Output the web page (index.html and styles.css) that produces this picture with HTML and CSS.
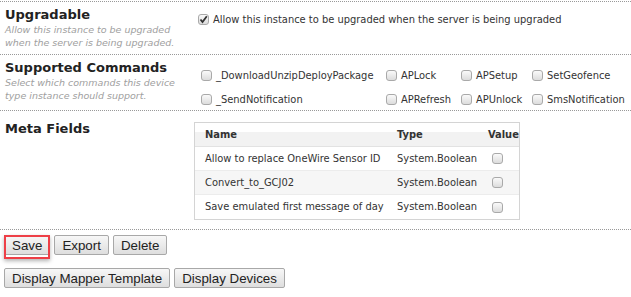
FILE: index.html
```html
<!DOCTYPE html>
<html>
<head>
<meta charset="utf-8">
<link rel="stylesheet" href="styles.css">
</head>
<body>
<div class="section sec-upgrade">
  <div class="label">
    <div class="title">Upgradable</div>
    <div class="desc">Allow this instance to be upgraded when the server is being upgraded.</div>
  </div>
  <div class="content upgrade-content">
    <label class="opt"><span class="cb checked"><svg viewBox="0 0 11 11" width="11" height="11"><path d="M2.5 5.5 L4.5 8 L8.8 2.2" fill="none" stroke="#333" stroke-width="1.8"/></svg></span><span>Allow this instance to be upgraded when the server is being upgraded</span></label>
  </div>
</div>
<div class="section sec-commands">
  <div class="label">
    <div class="title">Supported Commands</div>
    <div class="desc">Select which commands this device type instance should support.</div>
  </div>
  <div class="content commands">
    <label class="opt"><span class="cb"></span><span>_DownloadUnzipDeployPackage</span></label>
    <label class="opt"><span class="cb"></span><span>APLock</span></label>
    <label class="opt"><span class="cb"></span><span>APSetup</span></label>
    <label class="opt"><span class="cb"></span><span>SetGeofence</span></label>
    <label class="opt"><span class="cb"></span><span>_SendNotification</span></label>
    <label class="opt"><span class="cb"></span><span>APRefresh</span></label>
    <label class="opt"><span class="cb"></span><span>APUnlock</span></label>
    <label class="opt"><span class="cb"></span><span>SmsNotification</span></label>
  </div>
</div>
<div class="section sec-meta">
  <div class="label">
    <div class="title">Meta Fields</div>
  </div>
  <div class="content meta">
    <div class="grid">
      <div class="th">Name</div><div class="th">Type</div><div class="th">Value</div>
      <div class="td">Allow to replace OneWire Sensor ID</div><div class="td">System.Boolean</div><div class="td"><span class="cb"></span></div>
      <div class="td alt">Convert_to_GCJ02</div><div class="td alt">System.Boolean</div><div class="td alt"><span class="cb"></span></div>
      <div class="td">Save emulated first message of day</div><div class="td">System.Boolean</div><div class="td"><span class="cb"></span></div>
    </div>
  </div>
</div>
<div class="buttons">
  <div class="btn-row">
    <button class="btn focused">Save</button>
    <button class="btn">Export</button>
    <button class="btn">Delete</button>
  </div>
  <div class="btn-row">
    <button class="btn">Display Mapper Template</button>
    <button class="btn">Display Devices</button>
  </div>
</div>
</body>
</html>
```
FILE: styles.css
```css
html, body {
  margin: 0;
  padding: 0;
  background: #fff;
}
body {
  font-family: "DejaVu Sans", Verdana, sans-serif;
  font-size: 11px;
  color: #333;
  width: 631px;
  height: 297px;
  overflow: hidden;
}
.section {
  display: flex;
  border-top: 1px dotted #999;
  padding: 5px 5px 5px 5px;
}
.sec-upgrade { margin-top: 1px; }
.label {
  width: 193px;
  flex: none;
}
.title {
  font-weight: bold;
  font-size: 13px;
  line-height: 16px;
  color: #222;
}
.desc {
  font-style: italic;
  font-size: 9.5px;
  line-height: 13px;
  color: #a0a0a0;
}
.opt {
  display: flex;
  align-items: center;
  gap: 4px;
  white-space: nowrap;
  font-stretch: condensed;
}
.cb {
  display: inline-block;
  box-sizing: border-box;
  width: 11px;
  height: 11px;
  border: 1px solid #a9a9a9;
  border-radius: 3px;
  background: linear-gradient(#fafafa, #dcdcdc);
  flex: none;
  position: relative;
}
.cb svg {
  position: absolute;
  left: -1px;
  top: -1px;
}
.upgrade-content { padding-top: 6px; }
.commands {
  display: grid;
  grid-template-columns: 185px 75px 71px auto;
  grid-auto-rows: 20px;
  row-gap: 4px;
  margin-left: 3px;
  margin-top: 5px;
}
.sec-commands { padding-bottom: 1px; }
.sec-meta { padding-top: 10px; padding-bottom: 9px; }
.meta { margin-left: -4px; margin-top: 1px; }
.grid {
  display: grid;
  grid-template-columns: 192px 91px 41px;
  border: 1px solid #d4d4d4;
  overflow: hidden;
  font-stretch: condensed;
}
.th, .td {
  height: 24px;
  line-height: 24px;
  padding-left: 10px;
  white-space: nowrap;
  box-sizing: border-box;
  display: flex;
  align-items: center;
}
.th {
  font-weight: bold;
  color: #333;
  background: linear-gradient(#fff 0, #fff 40%, #f2f2f2 40%, #f2f2f2 100%);
  border-bottom: 1px solid #e2e2e2;
}
.td { border-bottom: 1px solid #ececec; }
.td.alt { background: #f6f6f6; }
.grid .td:nth-last-child(-n+3) { border-bottom: none; }
.td .cb { margin-left: 4px; }
.buttons {
  border-top: 1px dotted #999;
  padding: 5px 0 0 4px;
}
.btn-row {
  display: flex;
  gap: 4px;
  margin-bottom: 13px;
}
.btn-row + .btn-row { margin-top: 1px; }
.btn {
  font-family: "Liberation Sans", Arial, sans-serif;
  font-size: 13.33px;
  color: #222;
  height: 20px;
  padding: 0 7px;
  border: 1px solid #a8a8a8;
  border-radius: 2px;
  background: linear-gradient(#f7f7f7, #dedede);
}
.btn.focused {
  position: relative;
}
.btn.focused::after {
  content: "";
  position: absolute;
  left: -1px;
  top: -1px;
  right: -1px;
  bottom: -5px;
  border: 2px solid #ee3f47;
  box-shadow: 0 2px 4px rgba(0,0,0,0.3);
  pointer-events: none;
}
```
